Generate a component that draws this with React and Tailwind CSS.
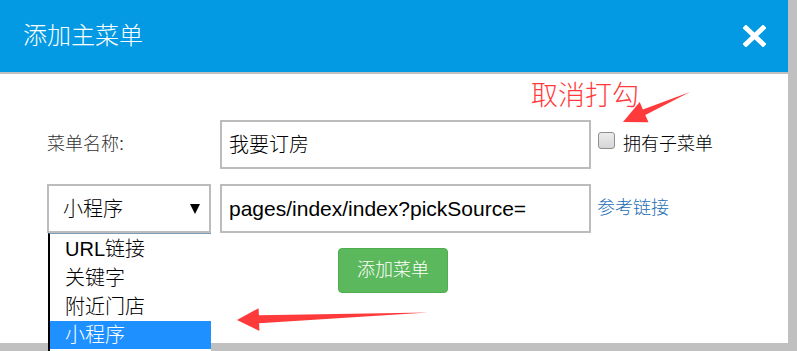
export default function App() {
  const options = ['URL链接', '关键字', '附近门店']

  return (
    <div className="relative w-[797px] h-[351px] overflow-hidden bg-[#c0c0c0] font-['Liberation_Sans','Noto_Sans_CJK_SC',sans-serif] text-[#222]">
      <div className="w-[788px] h-[343px] bg-white flex flex-col">
        {/* header */}
        <div className="h-[74px] shrink-0 bg-[#0399e3] border-b-2 border-[#c0c0c0] flex items-center justify-between pl-[23px] pr-[22px]">
          <span className="text-white text-[24px] font-light">添加主菜单</span>
          <svg width="23" height="22" viewBox="0 0 23 22">
            <path d="M3 3 L20 19 M20 3 L3 19" stroke="white" strokeWidth="5" strokeLinecap="square" />
          </svg>
        </div>

        <div className="pt-[46px]">
          <div className="flex items-center pl-[47px] h-[49px]">
            <span className="w-[173px] text-[18px] text-[#333] font-light">菜单名称:</span>
            <div className="w-[371px] h-[49px] border-2 border-[#bcbcbc] pl-[7px] flex items-center text-[20px] text-black font-light">
              我要订房
            </div>
            <div className="ml-[7px] -mt-[8px] w-[17px] h-[17px] rounded-[3px] border border-[#8e8e8e] bg-gradient-to-b from-[#ececec] to-[#d6d6d6]" />
            <span className="ml-[8px] text-[18px] text-black font-light">拥有子菜单</span>
          </div>

          <div className="flex items-center pl-[47px] h-[49px] mt-[15px]">
            <div className="w-[164px] h-[49px] border-2 border-[#bcbcbc] pl-[14px] pr-[9px] flex items-center justify-between text-[20px] text-black">
              <span className="font-light">小程序</span>
              <svg width="10" height="10" viewBox="0 0 10 10">
                <polygon points="0,0 10,0 5,10" fill="black" />
              </svg>
            </div>
            <div className="ml-[9px] w-[371px] h-[49px] border-2 border-[#bcbcbc] pl-[7px] flex items-center text-[21px] text-black">
              pages/index/index?pickSource=
            </div>
            <span className="ml-[6px] text-[18px] text-[#1d6db4] font-light">参考链接</span>
          </div>

          <div className="flex justify-center pr-[2px] mt-[15px]">
            <button className="w-[110px] h-[45px] rounded-[4px] bg-[#5cb85c] border border-[#4cae4c] text-white text-[18px] font-light">
              添加菜单
            </button>
          </div>
        </div>
      </div>

      {/* open select list */}
      <div className="absolute left-[48px] top-[233px] w-[163px] bg-white border-l-2 border-l-black border-t border-t-[#7f9db9] text-[20px] text-black font-light">
        {options.map((o) => (
          <div key={o} className="h-[29px] pl-[15px] flex items-center">{o}</div>
        ))}
        <div className="h-[28px] pl-[15px] flex items-center bg-[#1e90ff] text-white">小程序</div>
        <div className="h-[4px] bg-white" />
      </div>

      {/* annotations */}
      <span className="absolute left-[531px] top-[76px] text-[27px] font-light text-[#ff3b3b]">取消打勾</span>
      <svg className="absolute left-0 top-0 pointer-events-none" width="797" height="351">
        <polygon
          points="690,92 642.9,109.5 639.7,102.1 623,122 648.5,122.3 645.3,114.9"
          fill="#ff3a3a"
        />
        <polygon
          points="428,312.5 258.9,315.2 258.6,308.2 237,320 259.4,331 259.1,323.2"
          fill="#ff3a3a"
        />
      </svg>
    </div>
  )
}
